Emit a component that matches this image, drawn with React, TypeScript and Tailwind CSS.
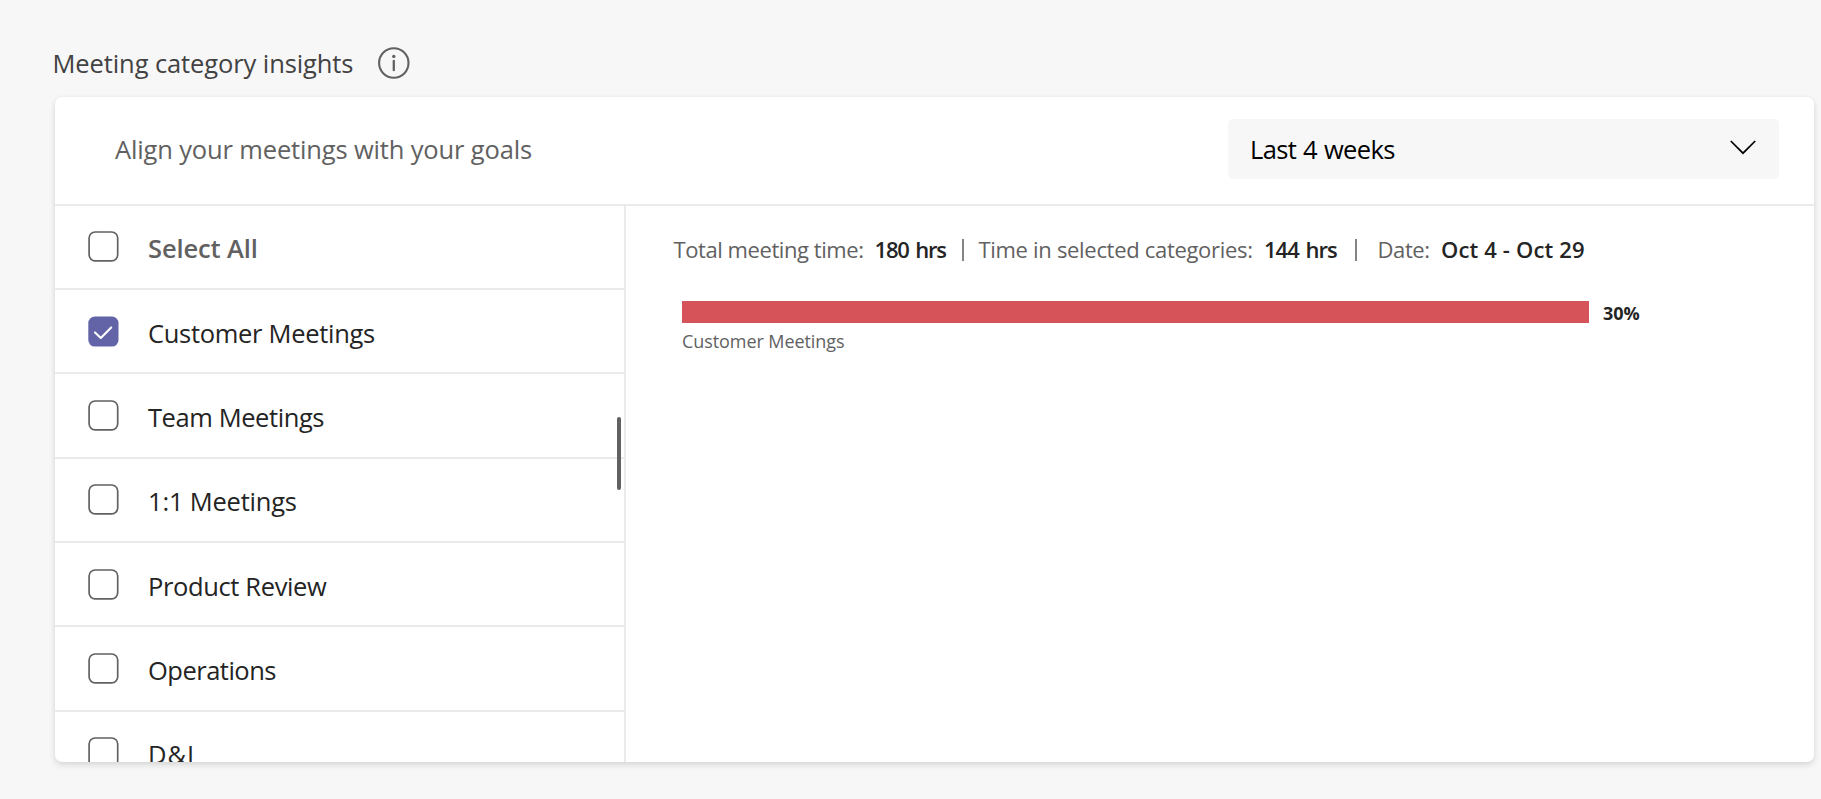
import React, { useState } from "react";
import clsx from "clsx";

type Category = { name: string; tracking: string };

const categories: Category[] = [
  { name: "Customer Meetings", tracking: "tracking-[-0.3px]" },
  { name: "Team Meetings", tracking: "tracking-[-0.42px]" },
  { name: "1:1 Meetings", tracking: "tracking-[-0.2px]" },
  { name: "Product Review", tracking: "tracking-[-0.37px]" },
  { name: "Operations", tracking: "tracking-[-0.5px]" },
  { name: "D&I", tracking: "tracking-[1px]" },
];

function InfoIcon() {
  return (
    <svg className="size-8" viewBox="0 0 32 32" fill="none">
      <circle cx="15.8" cy="16" r="14.7" stroke="#616161" strokeWidth="2.1" />
      <circle cx="15.8" cy="9.4" r="1.7" fill="#616161" />
      <path d="M15.8 14v9.2" stroke="#616161" strokeWidth="2.3" strokeLinecap="round" />
    </svg>
  );
}

function Checkbox({ checked }: { checked: boolean }) {
  return (
    <svg className="size-[31px] shrink-0" viewBox="0 0 31 31" fill="none">
      {checked ? (
        <>
          <rect x="0.3" y="0.6" width="30.2" height="30" rx="6.5" fill="#6264A7" />
          <path d="M7 16.4l5.8 5.5L23.2 11.4" stroke="#fff" strokeWidth="2.1" strokeLinecap="round" strokeLinejoin="round" />
        </>
      ) : (
        <rect x="1.1" y="1" width="28.6" height="28.8" rx="6" stroke="#616161" strokeWidth="1.7" />
      )}
    </svg>
  );
}

function Row({
  label,
  checked,
  onToggle,
  className,
}: {
  label: string;
  checked: boolean;
  onToggle: () => void;
  className: string;
}) {
  return (
    <button
      type="button"
      onClick={onToggle}
      className="flex h-[84.35px] w-full shrink-0 items-center gap-[29px] border-b-2 border-[#ebebeb] pl-[33px] text-left"
    >
      <Checkbox checked={checked} />
      <span className={clsx("pt-[3px] text-[25.5px] leading-9", className)}>{label}</span>
    </button>
  );
}

export default function App() {
  const [selected, setSelected] = useState<string[]>(["Customer Meetings"]);
  const all = selected.length === categories.length;
  const toggle = (name: string) =>
    setSelected((s) => (s.includes(name) ? s.filter((n) => n !== name) : [...s, name]));

  return (
    <div className="h-[799px] w-[1821px] overflow-hidden bg-[#f7f7f7] font-['Open_Sans','Noto_Sans',sans-serif] text-[#242424]">
      <header className="flex h-[97px] items-start pt-[45px] pl-[52.5px]">
        <h1 className="w-[325.5px] text-[25.5px] leading-9 tracking-[-0.1px] whitespace-nowrap text-[#424242]">
          Meeting category insights
        </h1>
        <div className="mt-0.5">
          <InfoIcon />
        </div>
      </header>

      <section className="ml-[55px] flex h-[665px] w-[1759px] flex-col overflow-hidden rounded-[7px] bg-white shadow-[0_3px_6px_rgba(0,0,0,0.12),0_0_4px_rgba(0,0,0,0.04)]">
        <div className="flex h-[108.6px] shrink-0 items-start justify-between border-b-2 border-[#ebebeb] pt-[22px] pr-[35px] pl-[60px]">
          <p className="pt-3 text-[25.5px] leading-9 tracking-[-0.15px] text-[#616161]">
            Align your meetings with your goals
          </p>
          <button
            type="button"
            className="flex h-[60px] w-[551px] items-center justify-between rounded-[5px] bg-[#f7f7f7] px-[22px] text-[25.5px] leading-9 tracking-[-0.65px] text-black [word-spacing:1px]"
          >
            Last 4 weeks
            <svg className="mb-1 h-4 w-7" viewBox="0 0 28 16" fill="none">
              <path d="M1.8 2L14 14.2 26.2 2" stroke="#000" strokeWidth="1.7" />
            </svg>
          </button>
        </div>

        <div className="flex min-h-0 grow">
          <aside className="relative flex w-[571px] shrink-0 flex-col overflow-hidden border-r-2 border-[#ebebeb]">
            <Row
              label="Select All"
              checked={all}
              onToggle={() => setSelected(all ? [] : categories.map((c) => c.name))}
              className="font-semibold tracking-[-0.12px] text-[#616161]"
            />
            {categories.map((c) => (
              <Row
                key={c.name}
                label={c.name}
                checked={selected.includes(c.name)}
                onToggle={() => toggle(c.name)}
                className={c.tracking}
              />
            ))}
            <div className="absolute top-[211.5px] right-[3px] h-[73px] w-1 rounded-full bg-[#616161]" />
          </aside>

          <main className="flex grow flex-col pt-[25.8px] pl-[47.5px]">
            <div className="flex h-9 items-center text-[22px] leading-9 whitespace-nowrap">
              <span className="w-[201px] tracking-[-0.43px] text-[#616161]">Total meeting time:</span>
              <span className="w-[87px] font-semibold tracking-[-1.2px] [word-spacing:2px]">180 hrs</span>
              <span className="mt-0.5 mr-[15px] h-[22px] w-0.5 bg-[#858585]" />
              <span className="w-[285.5px] tracking-[-0.31px] text-[#616161]">Time in selected categories:</span>
              <span className="w-[90.5px] font-semibold tracking-[-1px] [word-spacing:2px]">144 hrs</span>
              <span className="mt-0.5 mr-[21px] h-[22px] w-0.5 bg-[#858585]" />
              <span className="w-[63.5px] tracking-[-0.4px] text-[#616161]">Date:</span>
              <span className="font-semibold tracking-[0.15px]">Oct 4 - Oct 29</span>
            </div>
            <div className="mt-[33.6px] flex h-[22.4px] items-center pl-[8.4px]">
              <div className="h-full w-[907px] bg-[#d6535a]" />
              <span className="ml-[14px] pt-[3px] text-[18px] font-bold">30%</span>
            </div>
            <p className="mt-1 pl-[8.5px] text-[18px] leading-7 tracking-[-0.08px] text-[#616161]">
              Customer Meetings
            </p>
          </main>
        </div>
      </section>
    </div>
  );
}
